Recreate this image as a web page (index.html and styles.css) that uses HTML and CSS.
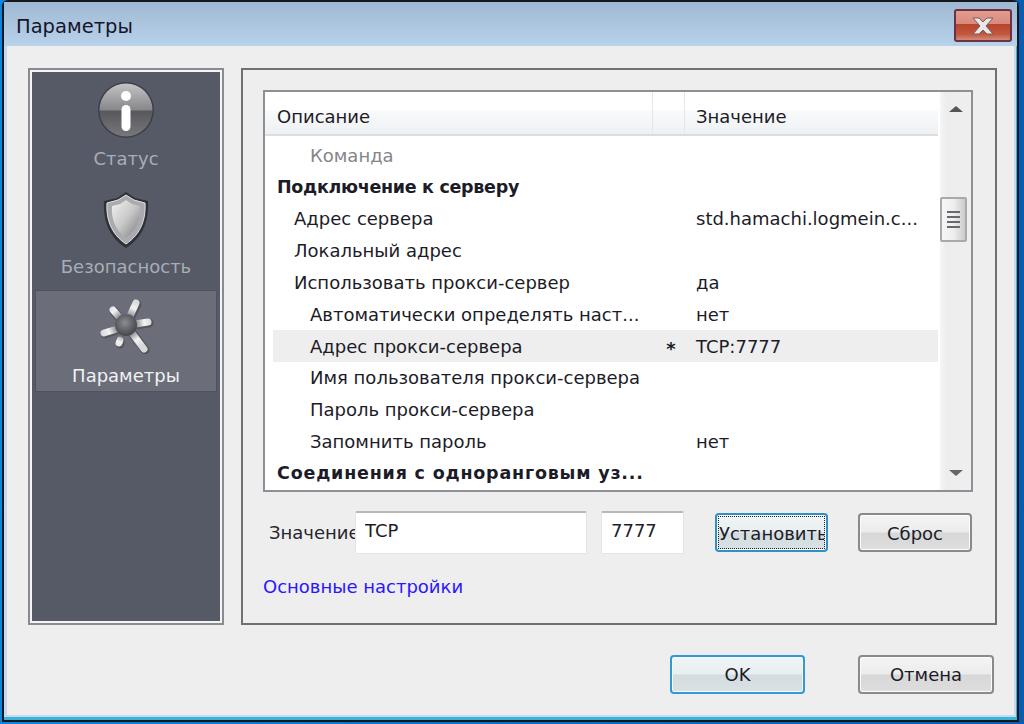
FILE: index.html
```html
<!DOCTYPE html>
<html lang="ru">
<head>
<meta charset="utf-8">
<title>Параметры</title>
<link rel="stylesheet" href="styles.css">
</head>
<body>
<div class="window">
  <header class="titlebar">
    <span class="title">Параметры</span>
    <button class="close" aria-label="Закрыть">
      <svg width="32" height="20" viewBox="0 0 32 20"><path d="M6 2h6l4 4 4-4h6l-7 8 7 8h-6l-4-4-4 4H6l7-8z" fill="#e8e8e8" stroke="#7b5a5a" stroke-width="1"/></svg>
    </button>
  </header>
  <div class="client">
    <div class="main">
      <nav class="sidebar">
        <div class="nav-item nav-status">
          <svg width="60" height="60" viewBox="0 0 60 60">
            <defs>
              <linearGradient id="ball" x1="0" y1="0" x2="0" y2="1"><stop offset="0" stop-color="#c4c4c6"/><stop offset=".5" stop-color="#87878b"/><stop offset=".52" stop-color="#57575c"/><stop offset="1" stop-color="#77777c"/></linearGradient>
            </defs>
            <circle cx="30" cy="30" r="28" fill="#3c3f48"/>
            <circle cx="30" cy="30" r="26.500" fill="url(#ball)"/>
            <circle cx="30" cy="16" r="5" fill="#fff"/>
            <rect x="25.500" y="25" width="9" height="26" rx="4.500" fill="#fff"/>
          </svg>
          <span class="nav-label">Статус</span>
        </div>
        <div class="nav-item nav-shield">
          <svg width="50" height="58" viewBox="0 0 50 58">
            <defs>
              <linearGradient id="shield" x1="0" y1="0" x2="1" y2="1"><stop offset="0" stop-color="#f2f2f2"/><stop offset=".5" stop-color="#c8c8c8"/><stop offset="1" stop-color="#77787c"/></linearGradient>
            </defs>
            <path d="M25 1l9 6 13 3c1 18-4 36-22 47C7 46 2 28 3 10l13-3z" fill="#2f3138"/>
            <path d="M25 4l8 5 11 3c1 16-4 31-19 41C10 43 5 28 6 12l11-3z" fill="#a9abaf" stroke="#e4e4e4" stroke-width="1"/>
            <path d="M25 9l6 4 8 2c1 12-3 24-14 32C14 39 10 27 11 15l8-2z" fill="url(#shield)"/>
          </svg>
          <span class="nav-label">Безопасность</span>
        </div>
        <div class="nav-item nav-active">
          <svg width="58" height="58" viewBox="0 0 58 58">
            <defs>
              <radialGradient id="hub" cx=".45" cy=".4" r=".65"><stop offset="0" stop-color="#8b8c92"/><stop offset="1" stop-color="#3f4047"/></radialGradient>
              <radialGradient id="arm" gradientUnits="userSpaceOnUse" cx="29" cy="29" r="26"><stop offset=".4" stop-color="#8f9096"/><stop offset=".7" stop-color="#f2f2f2"/><stop offset="1" stop-color="#d8d8d8"/></radialGradient>
            </defs>
            <g stroke="#3e3f46" stroke-width="9" stroke-linecap="round" opacity=".5">
              <path d="M34 21l6-13M39 29l13-2M36 38l12 16M23 45l0 3M20 34l-12 4M23 23l-6-8"/>
            </g>
            <path d="M33 20l6-13M38 28l13-2M35 37l12 16M23 44l-1 3M20 33l-13 4M23 22l-7-8" fill="none" stroke="url(#arm)" stroke-width="7" stroke-linecap="round"/>
            <circle cx="29" cy="29" r="11" fill="url(#hub)"/>
          </svg>
          <span class="nav-label">Параметры</span>
        </div>
      </nav>
      <section class="panel">
        <div class="table">
          <div class="table-body">
            <div class="table-head">
              <span class="cell-name">Описание</span>
              <span class="cell-mark"></span>
              <span class="cell-value">Значение</span>
            </div>
            <div class="row level2 muted"><span class="cell-name">Команда</span></div>
            <div class="row group group-tight"><span class="cell-name">Подключение к серверу</span></div>
            <div class="row level1"><span class="cell-name">Адрес сервера</span><span class="cell-mark"></span><span class="cell-value">std.hamachi.logmein.c...</span></div>
            <div class="row level1"><span class="cell-name">Локальный адрес</span></div>
            <div class="row level1"><span class="cell-name">Использовать прокси-сервер</span><span class="cell-mark"></span><span class="cell-value">да</span></div>
            <div class="row level2"><span class="cell-name">Автоматически определять наст...</span><span class="cell-mark"></span><span class="cell-value">нет</span></div>
            <div class="row level2 selected"><span class="cell-name">Адрес прокси-сервера</span><span class="cell-mark">*</span><span class="cell-value">TCP:7777</span></div>
            <div class="row level2"><span class="cell-name">Имя пользователя прокси-сервера</span></div>
            <div class="row level2"><span class="cell-name">Пароль прокси-сервера</span></div>
            <div class="row level2"><span class="cell-name">Запомнить пароль</span><span class="cell-mark"></span><span class="cell-value">нет</span></div>
            <div class="row group group-wide"><span class="cell-name">Соединения с одноранговым уз...</span></div>
          </div>
          <div class="scrollbar">
            <span class="arrow arrow-up"></span>
            <span class="thumb"><i></i><i></i><i></i><i></i></span>
            <span class="arrow arrow-down"></span>
          </div>
        </div>
        <div class="form-row">
          <label class="field-label">Значение</label>
          <input class="input input-host" value="TCP">
          <input class="input input-port" value="7777">
          <button class="btn btn-set"><span>Установить</span></button>
          <button class="btn btn-reset">Сброс</button>
        </div>
        <a class="basic-link" href="#">Основные настройки</a>
      </section>
    </div>
    <footer class="footer">
      <button class="btn btn-ok">OK</button>
      <button class="btn btn-cancel">Отмена</button>
    </footer>
  </div>
</div>
</body>
</html>
```

FILE: styles.css
```css
* { box-sizing: border-box; }
html, body { margin: 0; height: 100%; }
body {
  width: 1024px;
  height: 724px;
  overflow: hidden;
  background: linear-gradient(90deg, #0a86e0, #0a5cb0);
  font-family: "DejaVu Sans", sans-serif;
  font-size: 18px;
  color: #1c1c28;
}
.window {
  margin-left: 2px;
  width: 1017px;
  height: 722px;
  border: 2px solid #14181c;
  border-radius: 6px 6px 0 0;
  background: #c6d9ee;
  box-shadow: inset -1px -3px 0 #38b4d8;
  display: flex;
  flex-direction: column;
}
.titlebar {
  height: 44px;
  flex: none;
  background: linear-gradient(#9fb9d4, #b9d2eb);
  display: flex;
  align-items: flex-start;
  justify-content: space-between;
  padding: 7px 5px 0 12px;
}
.title { font-size: 19.500px; line-height: 36px; color: #15152a; }
.close {
  width: 58px;
  height: 33px;
  padding: 0;
  border: 2px solid #6b3144;
  border-radius: 3px;
  background: linear-gradient(#e39b8f 0, #d78a7e 45%, #b8442c 46%, #c2573f 80%, #d38b78 100%);
  display: flex;
  align-items: center;
  justify-content: center;
}
.client {
  flex: 1;
  margin: 0 3px 5px 3px;
  background: #eeeeee;
  padding: 22px 20px 0 21px;
  display: flex;
  flex-direction: column;
}
.main { display: flex; gap: 17px; height: 557px; flex: none; }
.sidebar {
  width: 196px;
  flex: none;
  border: 2px solid #8a8b92;
  background: #565a66;
  box-shadow: inset 0 0 0 2px #f4f4f4;
  padding: 10px 5px 0 5px;
  display: flex;
  flex-direction: column;
  align-items: stretch;
}
.nav-item {
  display: flex;
  flex-direction: column;
  align-items: center;
}
.nav-item svg { display: block; }
.nav-label { line-height: 24px; color: #a6aeb7; white-space: nowrap; }
.nav-status .nav-label { margin-top: 7px; }
.nav-shield { margin-top: 20px; }
.nav-shield .nav-label { margin-top: 6px; }
.nav-active {
  margin-top: 11px;
  height: 102px;
  background: #6b6e79;
  border: 1px solid #50535e;
  padding-top: 5px;
}
.nav-active .nav-label { color: #f0f2f4; margin-top: 10px; }
.panel {
  width: 756px;
  flex: none;
  border: 2px solid #707070;
  padding: 20px 22px 0 20px;
}
.table {
  width: 710px;
  height: 402px;
  border: 2px solid #8d9097;
  background: #ffffff;
  display: flex;
}
.table-body { flex: 1; min-width: 0; padding: 0 2px 0 8px; }
.table-head {
  margin-left: -8px;
  padding: 13px 0 0 12px;
  height: 44px;
  display: flex;
  align-items: flex-start;
  background: linear-gradient(#ffffff 0, #ffffff 18px, #f9fafb 18px, #eef1f4);
  border-bottom: 2px solid #dddddd;
  line-height: 24px;
  margin-bottom: 3px;
}
.table-head .cell-name { flex: 0 0 375px; }
.table-head .cell-mark { flex: 0 0 33px; height: 100%; margin-top: -13px; height: 42px; border-left: 1px solid #e6e6e6; border-right: 1px solid #e6e6e6; }
.table-head .cell-value { padding-left: 11px; }
.row {
  height: 31.800px;
  display: flex;
  align-items: center;
  white-space: nowrap;
  padding: 1px 0 0 4px;
}
.cell-name { flex: 0 0 auto; }
.row .cell-name { width: 375px; }
.level1 .cell-name { padding-left: 17px; }
.level2 .cell-name { padding-left: 33px; }
.row .cell-mark { flex: 0 0 44px; padding: 6px 6px 0 0; text-align: center; font-size: 18px; font-weight: bold; line-height: 18px; }
.muted { color: #85858a; }
.group { font-weight: 700; font-size: 17.500px; }
.group-tight { letter-spacing: -0.300px; }
.group-wide { letter-spacing: 0.800px; }
.selected { background: #eeeeee; }
.scrollbar {
  width: 31px;
  flex: none;
  background: linear-gradient(90deg, #f6f6f6, #ededed 20%, #efefef);
  display: flex;
  flex-direction: column;
  align-items: center;
  padding-top: 14px;
  padding-bottom: 14px;
}
.arrow { width: 0; height: 0; border-left: 7px solid transparent; border-right: 7px solid transparent; }
.arrow-up { border-bottom: 6px solid #555; }
.arrow-down { border-top: 6px solid #666; margin-top: auto; }
.thumb {
  margin-top: 85px;
  margin-right: 4px;
  width: 27px;
  height: 45px;
  border: 2px solid #a9a9a9;
  border-radius: 2px;
  background: linear-gradient(90deg, #f6f6f6, #eeeeee 50%, #cbcbcb);
  display: flex;
  flex-direction: column;
  align-items: center;
  justify-content: center;
  gap: 3px;
}
.thumb i { display: block; width: 13px; height: 2px; background: #66686c; }
.form-row {
  display: flex;
  align-items: center;
  height: 44px;
  margin-top: 18px;
}
.field-label {
  width: 86px;
  margin-left: 6px;
  flex: none;
  overflow: hidden;
  white-space: nowrap;
  color: #26262e;
}
.input {
  height: 43px;
  border: 1px solid #e2e4e8;
  border-top: 2px solid #b8b8b8;
  border-radius: 2px;
  background: #fff;
  font: inherit;
  padding: 0 9px 5px 9px;
  color: #1c1c28;
}
.input-host { width: 232px; }
.input-port { width: 83px; margin-left: 14px; }
.btn {
  font: inherit;
  color: #1c1c28;
  height: 39px;
  border: 2px solid #8a8a8a;
  border-radius: 4px;
  background: linear-gradient(#f4f4f4 0, #ececec 48%, #d7d7d7 52%, #dedede 100%);
  padding: 0;
  box-shadow: inset 0 0 0 1px #fcfcfc;
}
.btn-set {
  width: 113px;
  margin-left: 31px;
  border-color: #2f8fc9;
  background: linear-gradient(#f0f5f7 0, #e9eff1 48%, #d3dde0 52%, #d8e1e4 100%);
  padding: 1px;
  overflow: hidden;
}
.btn-set span {
  display: block;
  height: 100%;
  line-height: 34px;
  border: 1px dotted #222;
  white-space: nowrap;
  overflow: hidden;
}
.btn-reset { width: 114px; margin-left: 30px; padding-top: 3px; }
.basic-link {
  display: inline-block;
  margin-top: 21px;
  color: #2a16ff;
  text-decoration: none;
  line-height: 24px;
}
.footer {
  display: flex;
  justify-content: flex-end;
  margin-top: 30px;
  gap: 53px;
}
.btn-ok {
  width: 135px;
  height: 39px;
  border-color: #2f9ad6;
  background: linear-gradient(#f0f5f7 0, #e9eff1 48%, #d3dde0 52%, #d8e1e4 100%);
}
.btn-cancel { width: 136px; height: 39px; }
```
